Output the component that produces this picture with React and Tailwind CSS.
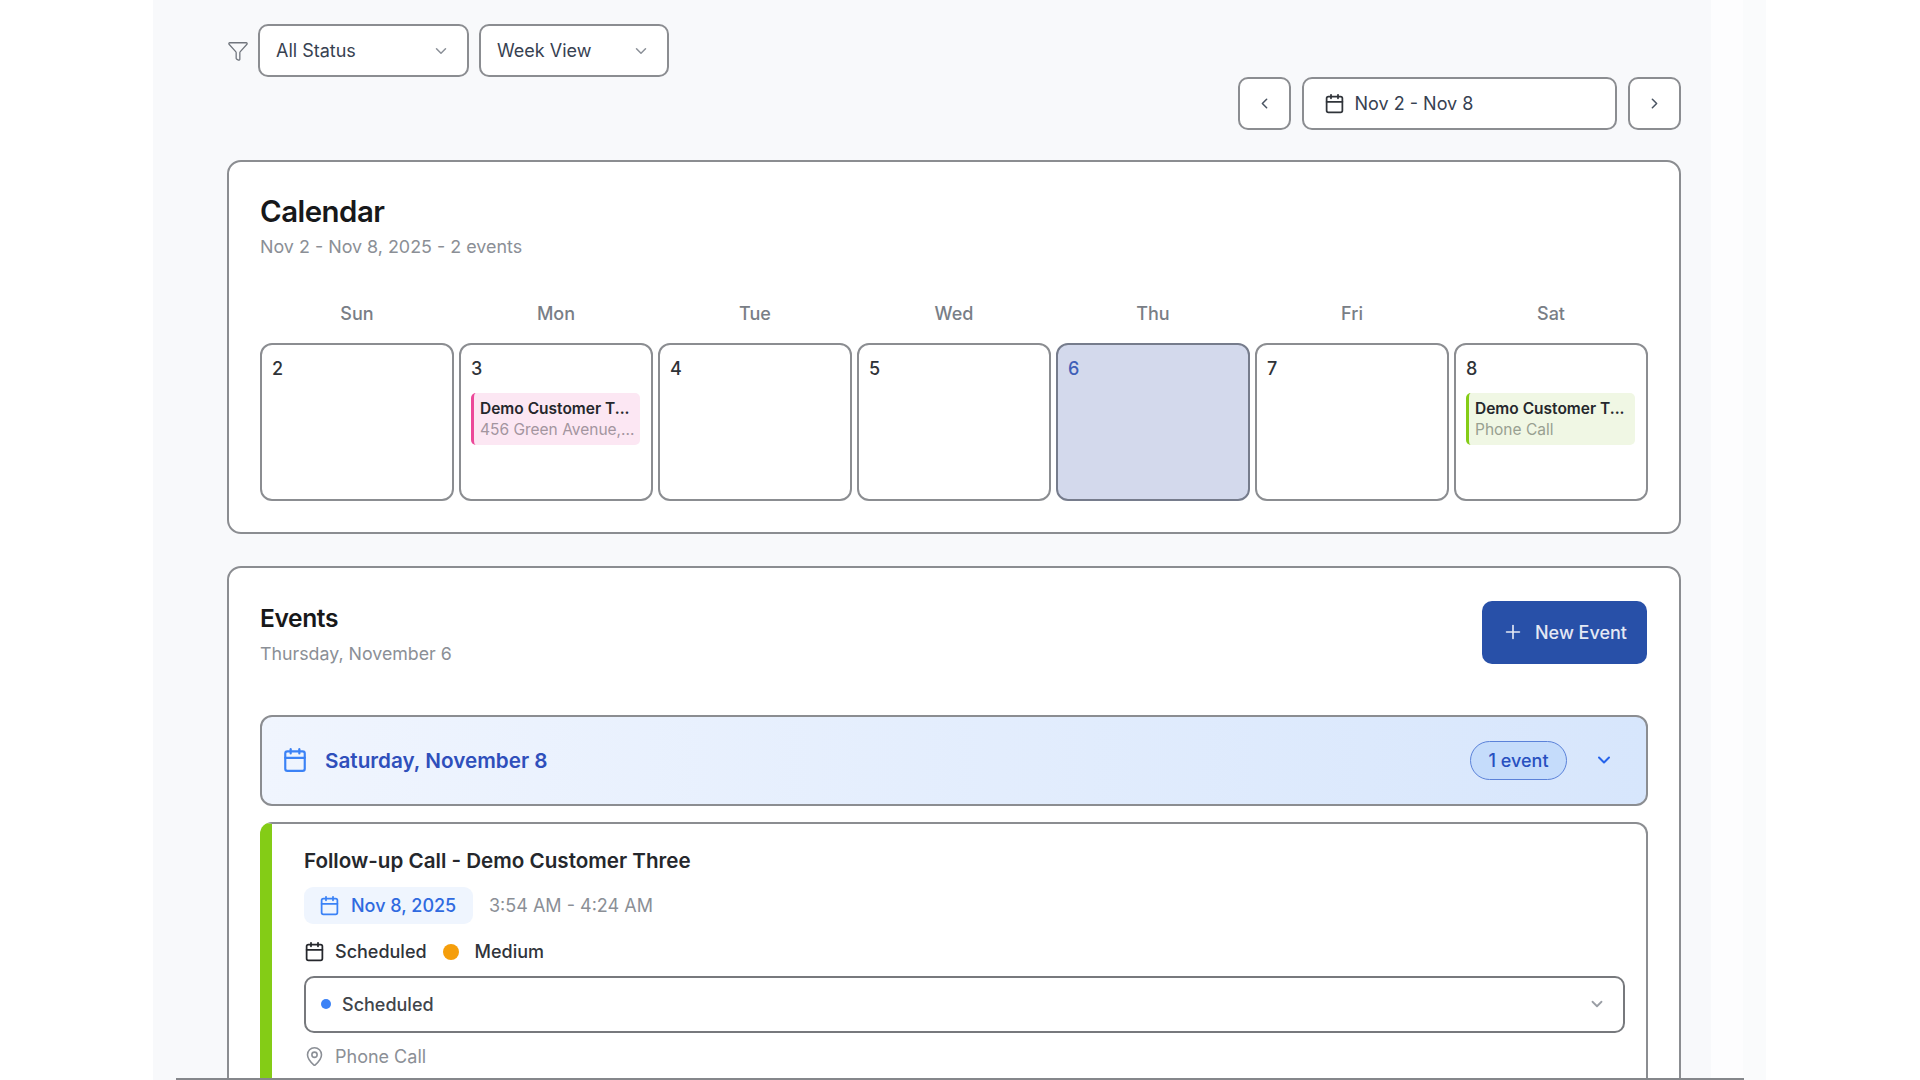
import React from 'react';
import {Calendar, ChevronDown, ChevronLeft, ChevronRight, Filter, MapPin, Plus} from 'lucide-react';

const days = [
    {label: 'Sun', date: 2},
    {label: 'Mon', date: 3, event: {title: 'Demo Customer T...', sub: '456 Green Avenue,...', box: 'border-[#ec4899] bg-[#fce7f3]', subColor: 'text-[#a3959f]'}},
    {label: 'Tue', date: 4},
    {label: 'Wed', date: 5},
    {label: 'Thu', date: 6, today: true},
    {label: 'Fri', date: 7},
    {label: 'Sat', date: 8, event: {title: 'Demo Customer T...', sub: 'Phone Call', box: 'border-[#84cc16] bg-[#f0f7e4]', subColor: 'text-[#98a091]'}},
];

const line = 'border-2 border-[#8b8d91]';

const Dropdown = ({label, width}) => (
    <div className={`${line} ${width} h-[53px] rounded-[10px] bg-white flex items-center justify-between pl-[16px] pr-[17px]`}>
        <span className="text-[18px] text-[#374151]">{label}</span>
        <ChevronDown size={18} className="text-[#8b9098]"/>
    </div>
);

const DayCell = ({day}) => (
    <div className={`${line} h-[158px] rounded-[12px] pl-[10px] pr-[11px] pt-[12px] ${day.today ? 'bg-[#d3d9ec] border-[#767c8c]' : 'bg-white'}`}>
        <div className={`text-[18px] leading-[24px] font-medium ${day.today ? 'text-[#3f5fb8]' : 'text-[#2f3338]'}`}>{day.date}</div>
        {day.event && (
            <div className={`mt-[12px] h-[52px] border-l-[3px] rounded-[5px] pl-[6px] pt-[5px] ${day.event.box}`}>
                <div className="text-[15.5px] leading-[21px] font-semibold text-[#25272c] whitespace-nowrap">{day.event.title}</div>
                <div className={`text-[15.5px] leading-[21px] whitespace-nowrap ${day.event.subColor}`}>{day.event.sub}</div>
            </div>
        )}
    </div>
);

const App = () => {
    return (
        <div className="relative w-[1920px] h-[1080px] overflow-hidden bg-white font-['Inter',sans-serif] flex">
            <div className="ml-[153px] w-[1558px] h-[1080px] bg-[#f8f9fb] pl-[74px] pr-[30px] pt-[24px]">
                <div className="flex items-center">
                    <Filter size={22} strokeWidth={1.4} className="text-[#70757d] mr-[9px]"/>
                    <Dropdown label="All Status" width="w-[211px]"/>
                    <div className="w-[10px]"/>
                    <Dropdown label="Week View" width="w-[190px]"/>
                </div>

                <div className="flex justify-end gap-[11px] pr-[0.5px]">
                    <div className={`${line} w-[53px] h-[53px] rounded-[10px] bg-white flex items-center justify-center`}>
                        <ChevronLeft size={17} strokeWidth={2.2} className="text-[#4b5563]"/>
                    </div>
                    <div className={`${line} w-[315px] h-[53px] rounded-[10px] bg-white flex items-center pl-[20px] gap-[10px]`}>
                        <Calendar size={21} strokeWidth={2} className="text-[#30343a]"/>
                        <span className="text-[18px] text-[#374151]">Nov 2 - Nov 8</span>
                    </div>
                    <div className={`${line} w-[53px] h-[53px] rounded-[10px] bg-white flex items-center justify-center`}>
                        <ChevronRight size={17} strokeWidth={2.2} className="text-[#4b5563]"/>
                    </div>
                </div>

                <div className={`${line} mt-[30px] h-[374px] rounded-[14px] bg-white px-[31px] pt-[29.5px]`}>
                    <h2 className="text-[29.4px] leading-[40px] font-semibold tracking-[-0.5px] text-[#17181a]">Calendar</h2>
                    <p className="mt-[3.5px] text-[17.9px] leading-[24px] text-[#8b8f96]">Nov 2 - Nov 8, 2025 - 2 events</p>
                    <div className="mt-[43px] grid grid-cols-7 gap-[5px]">
                        {days.map((day) => (
                            <div key={day.label} className="text-center text-[18px] leading-[24px] font-medium text-[#797e86]">{day.label}</div>
                        ))}
                    </div>
                    <div className="mt-[17px] grid grid-cols-7 gap-[5px]">
                        {days.map((day) => <DayCell key={day.date} day={day}/>)}
                    </div>
                </div>

                <div className={`${line} mt-[32px] rounded-[14px] bg-white px-[31px] pt-[32.5px] pb-[32px]`}>
                    <div className="flex justify-between h-[81px]">
                        <div className="pt-[1px]">
                            <h3 className="text-[24.6px] leading-[32px] font-semibold tracking-[-0.4px] text-[#17181a]">Events</h3>
                            <p className="mt-[8px] text-[17.8px] leading-[24px] text-[#8b8f96]">Thursday, November 6</p>
                        </div>
                        <button className="mr-[1px] w-[165px] h-[63px] rounded-[10px] bg-[#2850a8] text-[#e4e8f4] flex items-center justify-center gap-[11px] text-[18px] font-medium">
                            <Plus size={22} strokeWidth={1.8}/>
                            New Event
                        </button>
                    </div>

                    <div className={`${line} mt-[33px] h-[91.5px] rounded-[12px] bg-gradient-to-r from-[#f0f5fe] to-[#d7e6fc] flex items-center pl-[20px] pr-[32px]`}>
                        <Calendar size={26} strokeWidth={2} className="text-[#3b82f6]"/>
                        <span className="ml-[17px] text-[20.7px] font-semibold text-[#2f4fbb]">Saturday, November 8</span>
                        <span className="ml-auto w-[97px] h-[39px] rounded-full border-[1.5px] border-[#5b82d9] bg-[#c5dcfb] flex items-center justify-center text-[18px] font-medium text-[#2750c0]">1 event</span>
                        <ChevronDown size={20} strokeWidth={2.4} className="ml-[27px] text-[#2563eb]"/>
                    </div>

                    <div className={`${line} border-l-[12px] border-l-[#84cc16] mt-[16px] rounded-[12px] bg-white pl-[32px] pr-[21px] pt-[24px] pb-[30px]`}>
                        <h4 className="text-[20.6px] leading-[26px] font-semibold text-[#25272c]">Follow-up Call - Demo Customer Three</h4>
                        <div className="mt-[13px] flex items-center">
                            <div className="w-[169px] h-[37px] rounded-[9px] bg-[#eff5fe] flex items-center pl-[15px] gap-[11px] text-[#2f6ae0]">
                                <Calendar size={21} strokeWidth={2} className="text-[#3b82f6]"/>
                                <span className="text-[18px] font-medium">Nov 8, 2025</span>
                            </div>
                            <span className="ml-[16px] text-[18px] text-[#8b8f96]">3:54 AM - 4:24 AM</span>
                        </div>
                        <div className="mt-[15.5px] h-[24px] flex items-center">
                            <Calendar size={21} strokeWidth={2} className="text-[#25272c]"/>
                            <span className="ml-[10px] text-[18px] font-medium text-[#30343a]">Scheduled</span>
                            <span className="ml-[16px] w-[16px] h-[16px] rounded-full bg-[#f59e0b]"/>
                            <span className="ml-[16px] text-[18px] font-medium text-[#30343a]">Medium</span>
                        </div>
                        <div className="mt-[12px] h-[57px] rounded-[10px] border-2 border-[#77797d] flex items-center pl-[15px] pr-[17px]">
                            <span className="w-[10px] h-[10px] rounded-full bg-[#3b82f6]"/>
                            <span className="ml-[11px] text-[18px] font-medium text-[#41454b]">Scheduled</span>
                            <ChevronDown size={18} strokeWidth={2.4} className="ml-auto text-[#9a9ea5]"/>
                        </div>
                        <div className="mt-[12px] h-[24px] flex items-center">
                            <MapPin size={21} strokeWidth={1.8} className="text-[#8b8f96]"/>
                            <span className="ml-[10px] text-[18px] text-[#8b8f96]">Phone Call</span>
                        </div>
                    </div>
                </div>
            </div>
            <div className="w-[32px] h-[1080px] bg-[#fdfdfe]"/>
            <div className="w-[23px] h-[1080px] bg-[#fafbfc]"/>
            <div className="absolute left-[176px] bottom-0 w-[1568px] h-[2px] bg-[#85878b]"/>
        </div>
    );
};

export default App;
